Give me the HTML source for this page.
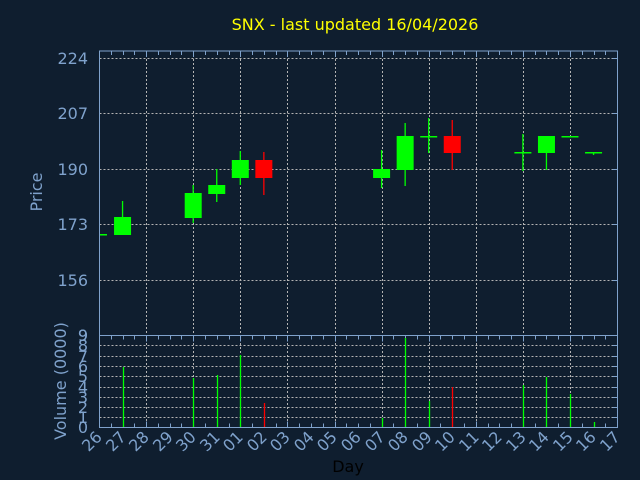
<!DOCTYPE html>
<html><head><meta charset="utf-8"><style>
html,body{margin:0;padding:0;background:#0f1e2f;}
svg{display:block;}
text{font-family:"DejaVu Sans","Liberation Sans",sans-serif;}
</style></head><body>
<svg id="s" width="640" height="480" viewBox="0 0 640 480" xmlns="http://www.w3.org/2000/svg">
<rect width="640" height="480" fill="#0f1e2f"/>
<text x="355" y="30" fill="#ffff00" font-size="16" text-anchor="middle">SNX - last updated 16/04/2026</text>
<g fill="#7fa2cc" font-size="16" text-anchor="end">
<text x="88" y="64">224</text>
<text x="88" y="119">207</text>
<text x="88" y="175">190</text>
<text x="88" y="230">173</text>
<text x="88" y="286">156</text>
<text x="88" y="341">9</text>
</g>
<text transform="translate(42,192) rotate(-90)" fill="#7fa2cc" font-size="16" text-anchor="middle">Price</text>
<text transform="translate(66,381) rotate(-90)" fill="#7fa2cc" font-size="16" text-anchor="middle">Volume (0000)</text>
<g fill="#7fa2cc" font-size="16" text-anchor="end">
<text x="88" y="433">0</text><text x="88" y="423">1</text><text x="88" y="413">2</text><text x="88" y="403">3</text><text x="88" y="393">4</text><text x="88" y="382">5</text><text x="88" y="372">6</text><text x="88" y="362">7</text><text x="88" y="351">8</text><text x="88" y="341">9</text>
</g>
<g id="xl" fill="#7fa2cc" font-size="16" text-anchor="end">
<text transform="translate(103,438) rotate(-45)">26</text>
<text transform="translate(127,438) rotate(-45)">27</text>
<text transform="translate(150,438) rotate(-45)">28</text>
<text transform="translate(174,438) rotate(-45)">29</text>
<text transform="translate(197,438) rotate(-45)">30</text>
<text transform="translate(221,438) rotate(-45)">31</text>
<text transform="translate(244,438) rotate(-45)">01</text>
<text transform="translate(268,438) rotate(-45)">02</text>
<text transform="translate(291,438) rotate(-45)">03</text>
<text transform="translate(315,438) rotate(-45)">04</text>
<text transform="translate(338,438) rotate(-45)">05</text>
<text transform="translate(362,438) rotate(-45)">06</text>
<text transform="translate(386,438) rotate(-45)">07</text>
<text transform="translate(409,438) rotate(-45)">08</text>
<text transform="translate(433,438) rotate(-45)">09</text>
<text transform="translate(456,438) rotate(-45)">10</text>
<text transform="translate(480,438) rotate(-45)">11</text>
<text transform="translate(503,438) rotate(-45)">12</text>
<text transform="translate(527,438) rotate(-45)">13</text>
<text transform="translate(550,438) rotate(-45)">14</text>
<text transform="translate(574,438) rotate(-45)">15</text>
<text transform="translate(597,438) rotate(-45)">16</text>
<text transform="translate(621,438) rotate(-45)">17</text>
</g>
<text x="348" y="472" fill="#000" font-size="16" text-anchor="middle">Day</text>
<g id="g"></g>
</svg>
<script>
var g=document.getElementById('g'),NS='http://www.w3.org/2000/svg';
function el(t,a){var e=document.createElementNS(NS,t);for(var k in a)e.setAttribute(k,a[k]);g.appendChild(e);return e;}
var L=99.5,R=617.5,T=51,M=335.5,B=427.5,ax='#7fa2cc',dash='#b4b4b4';
function X(i){return 99+23.55*i;}
[58,113,169,224,280].forEach(function(y){el('line',{x1:L,x2:R,y1:y+.5,y2:y+.5,stroke:dash,'stroke-dasharray':'2,2'});el('line',{x1:R-5,x2:R,y1:y+.5,y2:y+.5,stroke:ax});});
[345,356,366,376,387,397,407,417].forEach(function(y){el('line',{x1:L,x2:R,y1:y+.5,y2:y+.5,stroke:dash,'stroke-dasharray':'2,2'});el('line',{x1:R-5,x2:R,y1:y+.5,y2:y+.5,stroke:ax});});
for(var k=1;k<=10;k++){var x=Math.round(99+47.1*k)+.5;
 el('line',{x1:x,x2:x,y1:T,y2:B,stroke:dash,'stroke-dasharray':'2,2'});}
for(var k=0;k<=44;k++){var x=Math.round(99+11.775*k)+.5,len=(k%4==0)?6:4;
 el('line',{x1:x,x2:x,y1:T,y2:T+len,stroke:ax});el('line',{x1:x,x2:x,y1:M,y2:M+len,stroke:ax});el('line',{x1:x,x2:x,y1:B,y2:B-len,stroke:ax});}
el('rect',{x:L,y:T,width:R-L,height:M-T,fill:'none',stroke:ax});
el('rect',{x:L,y:M,width:R-L,height:B-M,fill:'none',stroke:ax});
var G='#00ff00',Rd='#ff0000';
var c=[[1,217,235,201,235,G],[4,193,218,185,223,G],[5,185,194,169,202,G],[6,160,178,151,185,G],[7,160,178,152,195,Rd],
[12,169,178,150,188,G],[13,136,170,123,186,G],[14,136,137.5,118,153,G],[15,136,153,120,170,Rd],[18,152,153.5,134,171,G],[19,136,153,136,170,G],[20,136,137.5,136,137,G],[21,152,153.5,152,155,G]];
c.forEach(function(d){var x=X(d[0]);el('line',{x1:x,x2:x,y1:d[3],y2:d[4],stroke:d[5],'stroke-width':1.3});
 el('rect',{x:x-8.5,y:d[1],width:17,height:Math.max(d[2]-d[1],1.5),fill:d[5]});});
el('rect',{x:100,y:234,width:7,height:1.5,fill:G});
var v=[[1,367,G],[4,378,G],[5,375,G],[6,355,G],[7,403,Rd],[12,418,G],[13,338,G],[14,401,G],[15,387,Rd],[18,385,G],[19,377,G],[20,394,G],[21,422,G]];
v.forEach(function(d){var x=Math.round(X(d[0]))+.5;el('line',{x1:x,x2:x,y1:d[1],y2:427,stroke:d[2],'stroke-width':1.3});});
</script>
</body></html>
